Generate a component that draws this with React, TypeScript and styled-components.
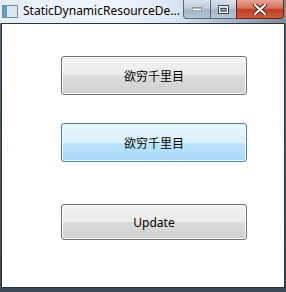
import React from "react";
import styled, { createGlobalStyle } from "styled-components";

const GlobalStyle = createGlobalStyle`
    html, body {
        margin: 0;
        padding: 0;
        background: #3b4652;
    }
`;

const Window = styled.div`
    width: 286px;
    height: 292px;
    display: flex;
    flex-direction: column;
    background: linear-gradient(180deg, #c9dcec 0px, #d7e6f2 22px, #5a6875 24px, #3d4955 292px);
    font-family: "Segoe UI", "Noto Sans", "Noto Sans CJK SC", sans-serif;
    overflow: hidden;
`;

const TitleBar = styled.div`
    height: 23px;
    display: flex;
    align-items: flex-start;
    background: linear-gradient(90deg, #e4eef7 0%, #eef5fb 40%, #d7e6f2 62%, #b9cbdb 72%, #7f8c98 100%);
`;

const AppIcon = styled.div`
    width: 14px;
    height: 11px;
    margin: 5px 5px 0 2px;
    border: 1px solid #7d8a96;
    background: linear-gradient(90deg, #5d9ecf 0 30%, #dbe7ef 30% 100%);
    flex-shrink: 0;
`;

const Title = styled.div`
    flex: 1;
    font-size: 12px;
    line-height: 22px;
    color: #000;
    white-space: nowrap;
    overflow: hidden;
    text-shadow: 0 0 6px #ffffff;
`;

const Controls = styled.div`
    display: flex;
    margin-right: 2px;
    height: 19px;
`;

const CtrlButton = styled.div<{ $close?: boolean; $w: number }>`
    width: ${p => p.$w}px;
    height: 19px;
    box-sizing: border-box;
    display: flex;
    align-items: center;
    justify-content: center;
    border: 1px solid ${p => (p.$close ? "#6b2317" : "#5b6673")};
    border-top: none;
    margin-left: -1px;
    border-radius: ${p => (p.$close ? "0 0 4px 0" : "0")};
    background: ${p =>
        p.$close
            ? "linear-gradient(180deg, #e8a394 0%, #d3705d 45%, #c13d26 55%, #cf5a3c 100%)"
            : "linear-gradient(180deg, #d8e2ec 0%, #c0cddb 45%, #a5b5c6 55%, #b7c6d5 100%)"};
    &:first-child {
        border-radius: 0 0 0 4px;
    }
`;

const Client = styled.div`
    flex: 1;
    margin: 0 1px 4px 1px;
    border: 1px solid #2b333b;
    background: #ffffff;
    display: flex;
    flex-direction: column;
    padding: 32px 0 0 59px;
`;

const Button = styled.div<{ $hot?: boolean; $h: number; $gap: number }>`
    width: 186px;
    height: ${p => p.$h}px;
    margin-bottom: ${p => p.$gap}px;
    box-sizing: border-box;
    border: 1px solid ${p => (p.$hot ? "#3c7fb1" : "#707070")};
    border-radius: 3px;
    display: flex;
    align-items: center;
    justify-content: center;
    font-size: 12px;
    color: #000;
    box-shadow: inset 0 0 0 1px ${p => (p.$hot ? "#f6fcff" : "#fbfbfb")};
    background: ${p =>
        p.$hot
            ? "linear-gradient(180deg, #eaf6fd 0%, #d9f0fc 50%, #bee6fd 50%, #a7d9f5 100%)"
            : "linear-gradient(180deg, #f2f2f2 0%, #ebebeb 50%, #dddddd 50%, #cfcfcf 100%)"};
`;

const App: React.FC = () => {
    return (
        <>
            <GlobalStyle />
            <Window>
                <TitleBar>
                    <AppIcon />
                    <Title>StaticDynamicResourceDe...</Title>
                    <Controls>
                        <CtrlButton $w={28}>
                            <svg width="10" height="4"><rect x="0" y="1" width="10" height="3" fill="#fff" stroke="#3c4650" strokeWidth="0.8" /></svg>
                        </CtrlButton>
                        <CtrlButton $w={27}>
                            <svg width="11" height="9"><rect x="0.5" y="0.5" width="10" height="8" fill="none" stroke="#3c4650" /><rect x="1.5" y="1.5" width="8" height="6" fill="none" stroke="#fff" strokeWidth="1" /><rect x="3" y="3.5" width="5" height="2.5" fill="none" stroke="#3c4650" strokeWidth="1" /></svg>
                        </CtrlButton>
                        <CtrlButton $w={48} $close>
                            <svg width="14" height="11" viewBox="0 0 14 11"><path d="M2 1 L12 10 M12 1 L2 10" stroke="#5a1a10" strokeWidth="4" strokeLinecap="round" /><path d="M2 1 L12 10 M12 1 L2 10" stroke="#fff" strokeWidth="2.2" strokeLinecap="round" /></svg>
                        </CtrlButton>
                    </Controls>
                </TitleBar>
                <Client>
                    <Button $h={39} $gap={28}>欲穷千里目</Button>
                    <Button $hot $h={39} $gap={42}>欲穷千里目</Button>
                    <Button $h={36} $gap={0}>Update</Button>
                </Client>
            </Window>
        </>
    );
};

export default App;
